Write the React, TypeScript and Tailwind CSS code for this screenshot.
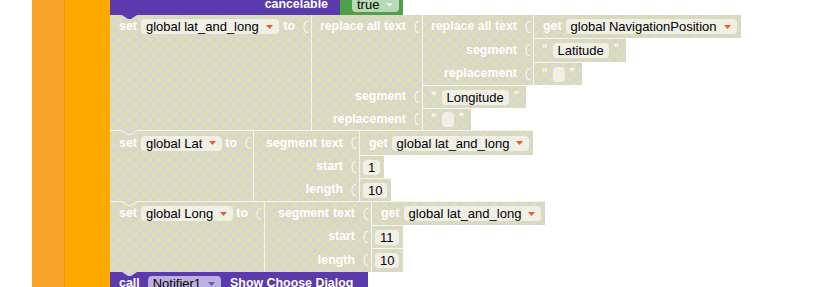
import type { ReactNode } from "react";

// disabled blockly blocks: grey with yellow cross hatch (10px tile), fixed so it lines up across blocks
const PAT =
  "bg-[#d5d5d2] bg-[image:linear-gradient(45deg,transparent_45%,#e2e1a4_45%,#e2e1a4_55%,transparent_55%),linear-gradient(-45deg,transparent_45%,#e2e1a4_45%,#e2e1a4_55%,transparent_55%)] bg-[length:10px_10px] bg-fixed";

function Label({ children, className = "" }: { children: ReactNode; className?: string }) {
  return (
    <span className={`whitespace-nowrap text-[12.4px] font-bold leading-none text-white ${className}`}>
      {children}
    </span>
  );
}

function Arrow({ color = "#ee5a2f" }: { color?: string }) {
  return (
    <svg width="7" height="4" viewBox="0 0 7 4" className="ml-[7px] shrink-0">
      <path d="M0 0H7L3.5 4Z" fill={color} />
    </svg>
  );
}

function Pill({
  text,
  arrow,
  arrowColor,
  className = "",
}: {
  text: string;
  arrow?: boolean;
  arrowColor?: string;
  className?: string;
}) {
  return (
    <span
      className={`flex h-[15px] shrink-0 items-center whitespace-nowrap rounded-[4px] bg-white/60 pl-[5px] text-[13px] leading-none text-black ${
        arrow ? "pr-[6px]" : "pr-[5px]"
      } ${className}`}
    >
      {text}
      {arrow && <Arrow color={arrowColor} />}
    </span>
  );
}

function Socket() {
  return (
    <svg width="6" height="12" viewBox="0 0 6 12" className="ml-[8px] shrink-0">
      <path d="M5 0.5C2.5 0.5 1 2.5 1 6S2.5 11.5 5 11.5" fill="none" stroke="#f6f6f2" strokeWidth="1.1" />
    </svg>
  );
}

function Slot({ h, children }: { h: string; children: ReactNode }) {
  return (
    <div className={`flex ${h} items-center justify-end pr-[2px]`}>
      {children}
      <Socket />
    </div>
  );
}

function Quote({ c }: { c: string }) {
  return <span className="-translate-y-[2px] text-[11px] font-bold leading-none text-white">{c}</span>;
}

function TextBlock({ text, h, top = true }: { text?: string; h: string; top?: boolean }) {
  return (
    <div className={`flex ${h} items-center border-l border-white/70 pl-[8px] pr-[7px] ${top ? "border-t" : ""} ${PAT}`}>
      <Quote c="“" />
      {text ? <Pill className="mx-[5px]" text={text} /> : <span className="mx-[5px] h-[15px] w-[12px] rounded-[4px] bg-white/60" />}
      <Quote c="”" />
    </div>
  );
}

function NumBlock({ n, h }: { n: string; h: string }) {
  return (
    <div className={`flex ${h} items-center border-l border-t border-white/70 pl-[3px] pr-[4px] ${PAT}`}>
      <Pill text={n} />
    </div>
  );
}

function GetBlock({ name, h, top = true }: { name: string; h: string; top?: boolean }) {
  return (
    <div className={`flex ${h} items-center border-l border-white/70 pl-[9px] pr-[4px] ${top ? "border-t" : ""} ${PAT}`}>
      <Label>get</Label>
      <Pill className="ml-[4px]" text={name} arrow />
    </div>
  );
}

function SetHead({ name, w, h, top }: { name: string; w: string; h: string; top?: boolean }) {
  return (
    <div className={`relative flex ${w} shrink-0 items-start ${top ? "border-t border-white/70" : ""} ${PAT}`}>
      <div className={`flex ${h} w-full items-center pl-[9px] pr-[2px]`}>
        <Label>set</Label>
        <Pill className="ml-[4px]" text={name} arrow />
        <Label className="ml-auto">to</Label>
        <Socket />
      </div>
      {top && (
        <svg width="15" height="5" viewBox="0 0 15 5" className="absolute -top-px left-[12px]">
          <path d="M0 0H15L9 4H6Z" fill="#d5d5d2" />
          <path d="M0 0.5L6 4.5H9L15 0.5" fill="none" stroke="#f6f6f2" strokeWidth="1" />
        </svg>
      )}
    </div>
  );
}

function SegmentBlock({ w, rows, ins }: { w: string; rows: string[]; ins: ReactNode }) {
  return (
    <div className="flex">
      <div className={`flex ${w} flex-col border-l border-t border-white/70 ${PAT}`}>
        <Slot h={rows[0]}>
          <Label>segment</Label>
          <Label className="ml-[4px]">text</Label>
        </Slot>
        <Slot h={rows[1]}>
          <Label>start</Label>
        </Slot>
        <Slot h={rows[2]}>
          <Label>length</Label>
        </Slot>
      </div>
      <div className="flex flex-col items-start">{ins}</div>
    </div>
  );
}

export default function App() {
  return (
    <div className="flex h-[287px] w-[824px] overflow-hidden bg-white font-['Liberation_Sans',Arial,sans-serif]">
      <div className="w-[32px] shrink-0" />
      <div className="w-[33px] shrink-0 border-r border-[#e3961f] bg-[#fba42b]" />
      <div className="w-[45px] shrink-0 bg-[#ffaa00]" />

      <div className="flex flex-col">
        {/* end of the purple block above, with the "true" input */}
        <div className="relative flex h-[15px] shrink-0">
          <div className="flex w-[230px] justify-end overflow-hidden bg-[#5b3aae] pr-[12px]">
            <div className="-mt-[7px] flex h-[23px] items-center">
              <Label>cancelable</Label>
            </div>
          </div>
          <div className="flex w-[63px] overflow-hidden bg-[#4ca14a] pl-[12px]">
            <div className="-mt-[7px] flex h-[23px] items-center">
              <Pill className="pl-[4px]" text="true" arrow arrowColor="#e4f2e3" />
            </div>
          </div>
          <svg width="15" height="4" viewBox="0 0 15 4" className="absolute left-[12px] top-[15px] z-10">
            <path d="M0 0H15L9 4H6Z" fill="#5b3aae" />
          </svg>
        </div>

        {/* set global lat_and_long */}
        <div className="flex h-[115px] shrink-0">
          <SetHead name="global lat_and_long" w="w-[201px]" h="h-[23px]" />
          <div className="flex">
            <div className={`flex w-[111px] flex-col border-l border-white/70 ${PAT}`}>
              <div className="h-[70px]">
                <Slot h="h-[23px]">
                  <Label>replace all text</Label>
                </Slot>
              </div>
              <Slot h="h-[23px]">
                <Label>segment</Label>
              </Slot>
              <Slot h="h-[22px]">
                <Label>replacement</Label>
              </Slot>
            </div>
            <div className="flex flex-col items-start">
              <div className="flex h-[70px]">
                <div className={`flex w-[111px] flex-col border-l border-white/70 ${PAT}`}>
                  <Slot h="h-[23px]">
                    <Label>replace all text</Label>
                  </Slot>
                  <Slot h="h-[24px]">
                    <Label>segment</Label>
                  </Slot>
                  <Slot h="h-[23px]">
                    <Label>replacement</Label>
                  </Slot>
                </div>
                <div className="flex flex-col items-start">
                  <GetBlock name="global NavigationPosition" h="h-[23px]" top={false} />
                  <TextBlock text="Latitude" h="h-[24px]" />
                  <TextBlock h="h-[23px]" />
                </div>
              </div>
              <TextBlock text="Longitude" h="h-[23px]" />
              <TextBlock h="h-[22px]" />
            </div>
          </div>
        </div>

        {/* set global Lat */}
        <div className="flex h-[71px] shrink-0">
          <SetHead name="global Lat" w="w-[143px]" h="h-[24px]" top />
          <SegmentBlock
            w="w-[106px]"
            rows={["h-[24px]", "h-[23px]", "h-[23px]"]}
            ins={
              <>
                <GetBlock name="global lat_and_long" h="h-[25px]" />
                <NumBlock n="1" h="h-[23px]" />
                <NumBlock n="10" h="h-[23px]" />
              </>
            }
          />
        </div>

        {/* set global Long */}
        <div className="flex h-[71px] shrink-0">
          <SetHead name="global Long" w="w-[154px]" h="h-[23px]" top />
          <SegmentBlock
            w="w-[107px]"
            rows={["h-[23px]", "h-[23px]", "h-[24px]"]}
            ins={
              <>
                <GetBlock name="global lat_and_long" h="h-[24px]" />
                <NumBlock n="11" h="h-[23px]" />
                <NumBlock n="10" h="h-[24px]" />
              </>
            }
          />
        </div>

        {/* call Notifier1.ShowChooseDialog */}
        <div className="relative flex h-[23px] w-[258px] shrink-0 items-center bg-[#5b3aae] pl-[9px]">
          <Label>call</Label>
          <Pill className="ml-[8px]" text="Notifier1" arrow arrowColor="#6e55bb" />
          <Label className="ml-[9px]">Show Choose Dialog</Label>
          <svg width="15" height="4" viewBox="0 0 15 4" className="absolute left-[12px] top-0">
            <path d="M0 0H15L9 4H6Z" fill="#d5d5d2" />
          </svg>
        </div>
      </div>
    </div>
  );
}
